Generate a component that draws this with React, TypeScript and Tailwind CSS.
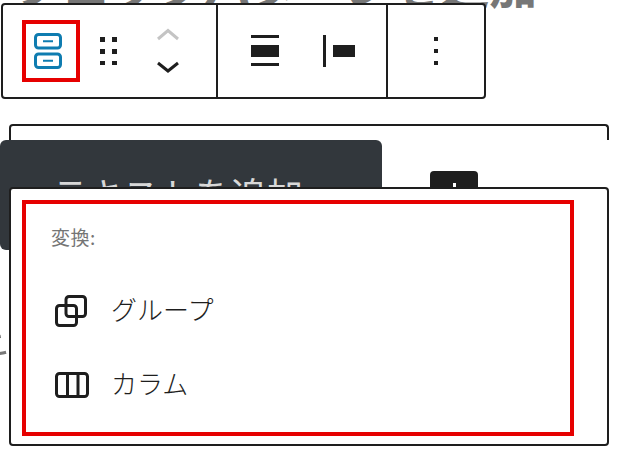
const jp = { fontFamily: '"Noto Sans CJK JP", "Noto Sans", sans-serif' };

const BlockIcon = () => (
  <svg width="28" height="36" viewBox="0 0 28 36" fill="none" stroke="#0f7cb0" strokeWidth="3">
    <rect x="1.5" y="1.5" width="25" height="13.5" rx="3" />
    <rect x="1.5" y="21" width="25" height="13.5" rx="3" />
    <path d="M9 8.25h10M9 27.75h10" strokeWidth="2" />
  </svg>
);

const DragIcon = () => (
  <svg width="17" height="28" viewBox="0 0 17 28" fill="#1e1e1e">
    <rect x="0" y="0" width="5" height="5" />
    <rect x="12" y="0" width="5" height="5" />
    <rect x="0" y="12" width="5" height="5" />
    <rect x="12" y="12" width="5" height="5" />
    <rect x="0" y="24" width="5" height="4" />
    <rect x="12" y="24" width="5" height="4" />
  </svg>
);

const Chevrons = () => (
  <svg width="24" height="46" viewBox="0 0 24 46" fill="none" strokeWidth="3">
    <path d="M2 11L12 2.5 22 11" stroke="#c4c4c4" />
    <path d="M2 35l10 8 10-8" stroke="#1e1e1e" />
  </svg>
);

const AlignWide = () => (
  <svg width="28" height="32" viewBox="0 0 28 32" fill="#1e1e1e">
    <rect x="0" y="0" width="28" height="3" />
    <rect x="0" y="10" width="28" height="12" />
    <rect x="0" y="28" width="28" height="3" />
  </svg>
);

const AlignLeft = () => (
  <svg width="33" height="32" viewBox="0 0 33 32" fill="#1e1e1e">
    <rect x="0" y="0" width="3" height="32" />
    <rect x="10" y="10" width="22" height="12" />
  </svg>
);

const Kebab = () => (
  <svg width="4" height="28" viewBox="0 0 4 28" fill="#1e1e1e">
    <rect x="0" y="0" width="4" height="4" />
    <rect x="0" y="12" width="4" height="4" />
    <rect x="0" y="24" width="4" height="4" />
  </svg>
);

const GroupIcon = () => (
  <svg width="32" height="32" viewBox="0 0 32 32" fill="none" stroke="#1e1e1e" strokeWidth="3">
    <rect x="1.5" y="10.5" width="20" height="20" rx="3" />
    <rect x="11" y="1.5" width="19.5" height="20" rx="3" />
  </svg>
);

const ColumnsIcon = () => (
  <svg width="34" height="26" viewBox="0 0 34 26" fill="none" stroke="#1e1e1e" strokeWidth="3">
    <rect x="1.5" y="1.5" width="31" height="23" rx="3" />
    <path d="M12.5 1v24M23 1v24" />
  </svg>
);

export default function App() {
  return (
    <div className="relative w-[619px] h-[452px] overflow-hidden bg-white" style={jp}>
      {/* heading cut off by the top of the crop */}
      <div className="absolute left-[14px] top-[-41px] whitespace-nowrap text-[48px] leading-[48px] font-bold text-[#777777]">
        ブロックパターンを追加
      </div>

      {/* block toolbar */}
      <div className="relative mt-[3px] ml-[1px] flex h-[96px] w-[485px] rounded-[4px] border-2 border-[#1e1e1e] bg-white">
        <div className="flex w-[215px] items-center border-r-2 border-[#1e1e1e] pl-[19px]">
          <div className="flex h-[62px] w-[58px] items-center border-4 border-[#e60000] pl-[8px]">
            <BlockIcon />
          </div>
          <div className="ml-[20px]"><DragIcon /></div>
          <div className="ml-[39px]"><Chevrons /></div>
        </div>
        <div className="flex w-[170px] items-center border-r-2 border-[#1e1e1e] pl-[33px]">
          <AlignWide />
          <div className="ml-[44px]"><AlignLeft /></div>
        </div>
        <div className="flex flex-1 items-center pl-[46px]">
          <Kebab />
        </div>
      </div>

      {/* block behind the popover */}
      <div className="mx-[9px] mt-[25px] h-[16px] w-[600px] rounded-t-[4px] border-x-2 border-t-2 border-[#1e1e1e]" />
      <div className="flex items-start">
        <div className="h-[110px] w-[382px] rounded-[6px] bg-[#32373c] pl-[52px] pt-[29px] text-[36px] leading-[48px] text-[#d8d8d8]">
          テキストを追加
        </div>
        <div className="ml-[48px] mt-[31px] flex h-[48px] w-[48px] items-start justify-center rounded-[4px] bg-[#1e1e1e] pt-[12px]">
          <div className="h-[4px] w-[3px] bg-white" />
        </div>
      </div>
      <div className="absolute left-[-47px] top-[303px] text-[60px] leading-[90px] font-light text-[#777777]">キ</div>

      {/* transform popover */}
      <div className="absolute left-[9px] top-[187px] h-[259px] w-[600px] rounded-[4px] border-2 border-[#1e1e1e] bg-white p-[11px]">
        <div className="h-[236px] w-[552px] border-4 border-[#e60000] pl-[25px] pt-[20px]">
          <div className="text-[19px] leading-[26px] tracking-[0.5px] text-[#757575]">変換:</div>
          <div className="mt-[41px] flex h-[40px] items-center pl-[4px]">
            <GroupIcon />
            <span className="ml-[24px] -mt-[5px] text-[26px] font-light text-[#1e1e1e]">グループ</span>
          </div>
          <div className="mt-[34px] flex h-[40px] items-center pl-[4px]">
            <ColumnsIcon />
            <span className="ml-[22px] -mt-[5px] text-[26px] font-light text-[#1e1e1e]">カラム</span>
          </div>
        </div>
      </div>
    </div>
  );
}
